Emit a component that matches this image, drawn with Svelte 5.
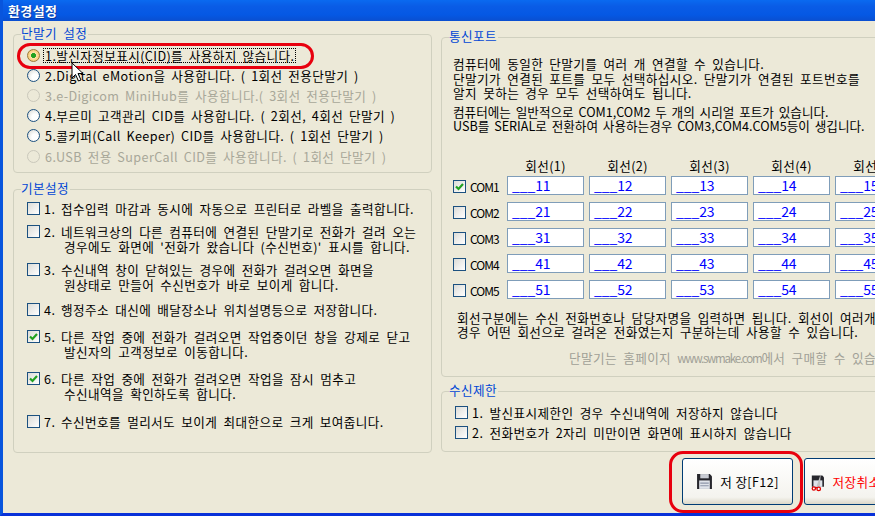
<script>
  const terminals = [
    { text: "1.발신자정보표시(CID)를 사용하지 않습니다.", selected: true },
    { text: "2.Digital eMotion을 사용합니다. ( 1회선 전용단말기 )" },
    { text: "3.e-Digicom MiniHub를 사용합니다.( 3회선 전용단말기 )", disabled: true },
    { text: "4.부르미 고객관리 CID를 사용합니다. ( 2회선, 4회선 단말기 )" },
    { text: "5.콜키퍼(Call Keeper) CID를 사용합니다. ( 1회선 단말기 )" },
    { text: "6.USB 전용 SuperCall CID를 사용합니다. ( 1회선 단말기 )", disabled: true }
  ];

  const options = [
    { no: "1.", lines: ["접수입력 마감과 동시에 자동으로 프린터로 라벨을 출력합니다."], gap: 0 },
    { no: "2.", lines: ["네트워크상의 다른 컴퓨터에 연결된 단말기로 전화가 걸려 오는", "경우에도 화면에 '전화가 왔습니다 (수신번호)' 표시를 합니다."], gap: 8 },
    { no: "3.", lines: ["수신내역 창이 닫혀있는 경우에 전화가 걸려오면 화면을", "원상태로 만들어 수신번호가 바로 보이게 합니다."], gap: 8 },
    { no: "4.", lines: ["행정주소 대신에 배달장소나 위치설명등으로 저장합니다."], gap: 10 },
    { no: "5.", lines: ["다른 작업 중에 전화가 걸려오면 작업중이던 창을 강제로 닫고", "발신자의 고객정보로 이동합니다."], gap: 12, checked: true },
    { no: "6.", lines: ["다른 작업 중에 전화가 걸려오면 작업을 잠시 멈추고", "수신내역을 확인하도록 합니다."], gap: 12, checked: true },
    { no: "7.", lines: ["수신번호를 멀리서도 보이게 최대한으로 크게 보여줍니다."], gap: 13 }
  ];

  const lines = [1, 2, 3, 4, 5];
  const ports = [1, 2, 3, 4, 5];
</script>

{#snippet checkbox(checked)}
  <span class="check">
    {#if checked}
      <svg width="11" height="11" viewBox="0 0 11 11">
        <path d="M2 5.5 L4.5 8 L9 3" fill="none" stroke="#21a121" stroke-width="2.2" />
      </svg>
    {/if}
  </span>
{/snippet}

<div class="window">
  <div class="titlebar">환경설정</div>

  <div class="client">
    <div class="left">
      <fieldset class="group terminal">
        <legend>단말기 설정</legend>
        <div class="body">
          {#each terminals as t}
            <div class="radio-row" class:disabled={t.disabled}>
              <span class="radio" class:on={t.selected}></span>
              <span class="label" class:focused={t.selected}>{t.text}</span>
            </div>
          {/each}
        </div>
      </fieldset>

      <fieldset class="group basic">
        <legend>기본설정</legend>
        <div class="body">
          {#each options as o}
            <div class="option" style="margin-top: {o.gap}px">
              {@render checkbox(o.checked)}
              <span class="no">{o.no}</span>
              <div class="option-text">
                {#each o.lines as line, i}
                  <div class:indent={i > 0}>{line}</div>
                {/each}
              </div>
            </div>
          {/each}
        </div>
      </fieldset>
    </div>

    <div class="right">
      <fieldset class="group port">
        <legend>통신포트</legend>
        <div class="body">
          <div class="info">
            <p>컴퓨터에 동일한 단말기를 여러 개 연결할 수 있습니다.</p>
            <p>단말기가 연결된 포트를 모두 선택하십시오. 단말기가 연결된 포트번호를</p>
            <p>알지 못하는 경우 모두 선택하여도 됩니다.</p>
          </div>
          <div class="info second">
            <p>컴퓨터에는 일반적으로 COM1,COM2 두 개의 시리얼 포트가 있습니다.</p>
            <p>USB를 SERIAL로 전환하여 사용하는경우 COM3,COM4.COM5등이 생깁니다.</p>
          </div>

          <div class="ports">
            <div></div>
            {#each lines as l}
              <div class="head">회선({l})</div>
            {/each}
            {#each ports as p}
              <div class="com">
                {@render checkbox(p === 1)}
                <span>COM{p}</span>
              </div>
              {#each lines as l}
                <div class="field">___{p}{l}</div>
              {/each}
            {/each}
          </div>

          <div class="note">
            <p>회선구분에는 수신 전화번호나 담당자명을 입력하면 됩니다. 회선이 여러개인</p>
            <p>경우 어떤 회선으로 걸려온 전화였는지 구분하는데 사용할 수 있습니다.</p>
          </div>
          <div class="shop">단말기는 홈페이지 <span class="url">www.swmake.com</span>에서 구매할 수 있습니다.</div>
        </div>
      </fieldset>

      <fieldset class="group limit">
        <legend>수신제한</legend>
        <div class="body">
          <div class="limit-row">
            {@render checkbox(false)}
            <span>1. 발신표시제한인 경우 수신내역에 저장하지 않습니다</span>
          </div>
          <div class="limit-row">
            {@render checkbox(false)}
            <span>2. 전화번호가 2자리 미만이면 화면에 표시하지 않습니다</span>
          </div>
        </div>
      </fieldset>

      <div class="buttons">
        <button class="btn save">
          <svg width="17" height="17" viewBox="0 0 16 16">
            <path d="M1 1 H13 L15 3 V15 H1 Z" fill="#26262c" />
            <rect x="4" y="1" width="8" height="4" fill="#c9ccd4" />
            <rect x="3" y="7" width="10" height="8" fill="#dfe3ea" />
            <path d="M4 9.5 H12 M4 12 H12" stroke="#8d95a8" />
          </svg>
          <span>저 장[F12]</span>
        </button>
        <button class="btn cancel">
          <svg width="18" height="22" viewBox="0 0 18 22">
            <path d="M1 3 H14 L16 5 V17 H1 Z" fill="#26262c" />
            <rect x="3" y="9" width="11" height="8" fill="#dfe3ea" />
            <path d="M7 16 L12 1 L11 16 Z" fill="#c4c4c4" />
            <circle cx="3.5" cy="19" r="2" fill="#fff" stroke="#e00000" stroke-width="1.6" />
            <circle cx="9.5" cy="19.5" r="2.2" fill="#fff" stroke="#e00000" stroke-width="1.6" />
            <path d="M5 18 H8" stroke="#e00000" stroke-width="1.5" />
          </svg>
          <span>저장취소[ESC]</span>
        </button>
      </div>
    </div>
  </div>

  <div class="mark mark-radio"></div>
  <div class="mark mark-save"></div>
  <svg class="cursor" width="14" height="22" viewBox="0 0 14 22">
    <path d="M1 1 V16 L4.5 12.5 L7.5 19 L10 18 L7 11.5 H12 Z" fill="#fff" stroke="#000" stroke-width="1" />
  </svg>
</div>

<style>
  :global(body) {
    margin: 0;
  }

  .window {
    position: relative;
    width: 875px;
    height: 516px;
    overflow: hidden;
    display: flex;
    flex-direction: column;
    box-sizing: border-box;
    background: #ece9d8;
    border-left: 3px solid #0855dd;
    border-bottom: 3px solid #0831d9;
    font-family: "Noto Sans CJK KR", sans-serif;
    font-size: 12.6px;
    line-height: 15px;
    letter-spacing: 0.4px;
    word-spacing: 3px;
    color: #000;
  }

  .titlebar {
    flex: none;
    height: 21px;
    margin-left: -3px;
    padding-left: 8px;
    background: linear-gradient(#0a6af0 0%, #0a5ce6 30%, #0558e4 70%, #0a4fd0 100%);
    color: #fff;
    font-weight: 700;
    font-size: 13px;
    line-height: 22px;
    text-shadow: 1px 1px 0 #0b3aa0;
  }

  .client {
    display: flex;
    gap: 9px;
    padding: 6px 0 0 10px;
  }

  .left {
    flex: none;
    width: 419px;
    display: flex;
    flex-direction: column;
    gap: 9px;
  }

  .right {
    flex: none;
    width: 480px;
    display: flex;
    flex-direction: column;
    margin-top: 3px;
    gap: 7px;
  }

  .group {
    margin: 0;
    padding: 0;
    box-sizing: border-box;
    border: 1px solid #d0d0bf;
    border-radius: 4px;
  }

  legend {
    padding: 0 1px 0 0;
    margin-left: 7px;
    color: #0046d5;
    line-height: 15px;
    height: 15px;
    transform: translateY(-2px);
  }

  .terminal {
    height: 146px;
  }

  .terminal .body {
    padding: 3px 0 0 13px;
  }

  .radio-row {
    display: flex;
    align-items: center;
    height: 20.2px;
    gap: 3px;
    white-space: pre;
    word-spacing: 2.5px;
  }

  .radio-row.disabled {
    color: #a8a799;
  }

  .radio {
    flex: none;
    box-sizing: border-box;
    width: 13px;
    height: 13px;
    border-radius: 50%;
    border: 1px solid #1c5180;
    background: radial-gradient(circle at 65% 65%, #fff 30%, #d6d6cf 100%);
  }

  .disabled .radio {
    border-color: #cac8bb;
    background: #ece9d8;
  }

  .radio.on {
    border-color: #9a7a3a;
    background: radial-gradient(circle, #21a121 0 2.2px, #fbe3a8 2.8px, #f5b94c 100%);
  }

  .label {
    padding: 0 1px;
    line-height: 13px;
    border: 1px solid transparent;
  }

  .label.focused {
    border: 1px dotted #000;
  }

  .basic {
    height: 271px;
  }

  .basic .body {
    padding: 4px 0 0 13px;
  }

  .option {
    display: flex;
    align-items: flex-start;
  }

  .check {
    flex: none;
    display: flex;
    align-items: center;
    justify-content: center;
    box-sizing: border-box;
    width: 13px;
    height: 13px;
    margin-top: 1px;
    border: 1px solid #1c5180;
    background: linear-gradient(135deg, #dcdcd7, #fff);
  }

  .no {
    flex: none;
    width: 21px;
    padding-left: 4px;
    box-sizing: border-box;
  }

  .option-text {
    white-space: pre;
  }

  .indent {
    padding-left: 3px;
  }

  .port {
    height: 347px;
  }

  .port .body {
    padding: 12px 0 0 11px;
  }

  .info p,
  .note p {
    margin: 0;
    white-space: pre;
  }

  .info p {
    line-height: 14.5px;
  }

  .info.second {
    margin-top: 4px;
    letter-spacing: 0;
    word-spacing: 2px;
  }

  .ports {
    display: grid;
    grid-template-columns: 49px repeat(5, 77px);
    grid-template-rows: 11px repeat(5, 19px);
    column-gap: 5px;
    row-gap: 7px;
    margin-top: 24px;
  }

  .head {
    text-align: center;
    line-height: 15px;
    word-spacing: 0;
    white-space: nowrap;
  }

  .com {
    display: flex;
    align-items: center;
    gap: 4px;
    font-size: 12px;
    letter-spacing: -1px;
  }

  .com .check {
    margin-top: 2px;
  }

  .com span:last-child {
    margin-top: 2px;
  }

  .field {
    box-sizing: border-box;
    border: 1px solid #7f9db9;
    background: #fff;
    color: #0000ff;
    padding-left: 4px;
    line-height: 17px;
    font-size: 14px;
    letter-spacing: -0.1px;
  }

  .note {
    margin: 12px 0 0 4px;
    line-height: 14px;
  }

  .shop {
    margin: 11px 0 0 116px;
    color: #a0a096;
    white-space: pre;
  }

  .url {
    font-size: 11.5px;
    letter-spacing: -1.2px;
  }

  .limit {
    height: 68px;
  }

  .limit .body {
    padding: 6px 0 0 13px;
  }

  .limit-row {
    display: flex;
    align-items: flex-start;
    gap: 4px;
    height: 20px;
    white-space: pre;
  }

  .buttons {
    display: flex;
    gap: 11px;
    margin-top: -1px;
    margin-left: 241px;
  }

  .btn {
    flex: none;
    display: flex;
    align-items: center;
    justify-content: center;
    gap: 7px;
    height: 47px;
    padding: 0;
    border: 1px solid #003c74;
    border-radius: 3px;
    background: linear-gradient(#fff, #f4f3ee 85%, #dcd8c8);
    font: inherit;
    letter-spacing: inherit;
    word-spacing: 0;
    color: #000;
    white-space: pre;
  }

  .save {
    width: 111px;
  }

  .cancel {
    width: 111px;
    padding-left: 6px;
    justify-content: flex-start;
    color: #f00;
  }

  .mark {
    position: absolute;
    box-sizing: border-box;
    border: 3px solid #e8000e;
    pointer-events: none;
  }

  .mark-radio {
    left: 14px;
    top: 43px;
    width: 297px;
    height: 26px;
    border-radius: 13px;
  }

  .mark-save {
    left: 666px;
    top: 451px;
    width: 134px;
    height: 62px;
    border-radius: 14px;
  }

  .cursor {
    position: absolute;
    left: 68px;
    top: 62px;
  }
</style>
